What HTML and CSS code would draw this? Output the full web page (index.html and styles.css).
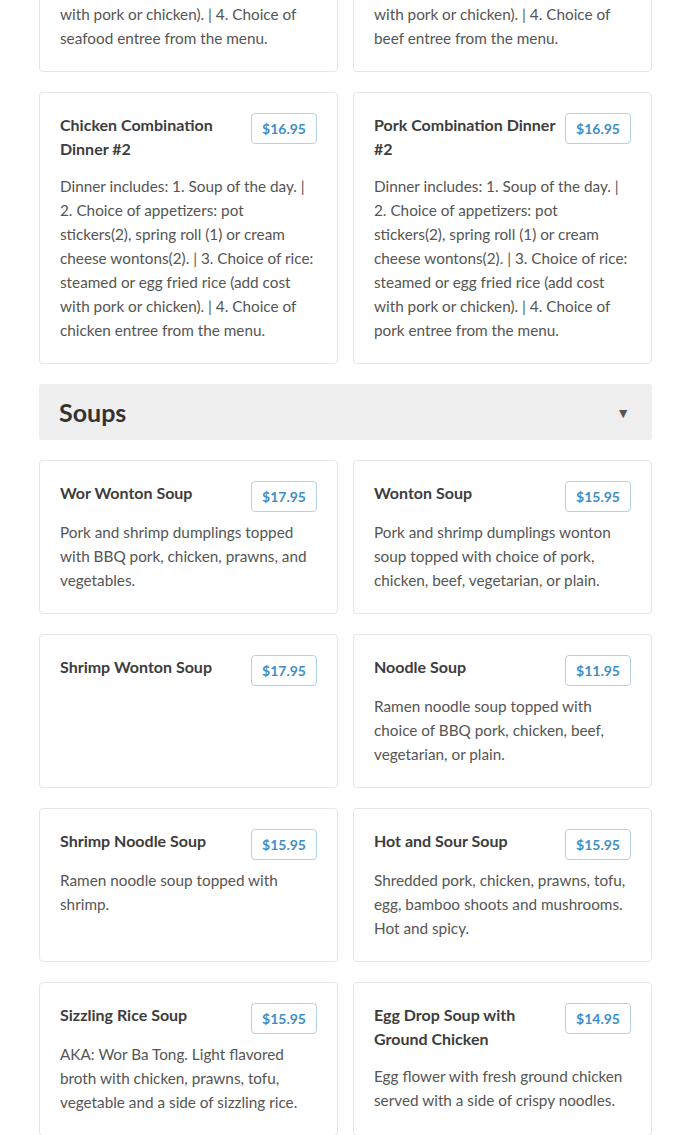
FILE: index.html
```html
<!DOCTYPE html>
<html lang="en">
<head>
<meta charset="utf-8">
<title>Menu</title>
<link rel="stylesheet" href="styles.css">
</head>
<body>
<main class="menu">
  <section class="grid">
    <article class="card">
      <div class="card-head"><h3 class="title">Seafood Combination Dinner #2</h3><span class="price">$17.95</span></div>
      <p class="desc">Dinner includes: 1. Soup of the day. | 2. Choice of appetizers: pot stickers(2), spring roll (1) or cream cheese wontons(2). | 3. Choice of rice: steamed or egg fried rice (add cost with pork or chicken). | 4. Choice of seafood entree from the menu.</p>
    </article>
    <article class="card">
      <div class="card-head"><h3 class="title">Beef Combination Dinner #2</h3><span class="price">$16.95</span></div>
      <p class="desc">Dinner includes: 1. Soup of the day. | 2. Choice of appetizers: pot stickers(2), spring roll (1) or cream cheese wontons(2). | 3. Choice of rice: steamed or egg fried rice (add cost with pork or chicken). | 4. Choice of beef entree from the menu.</p>
    </article>
    <article class="card">
      <div class="card-head"><h3 class="title">Chicken Combination Dinner #2</h3><span class="price">$16.95</span></div>
      <p class="desc">Dinner includes: 1. Soup of the day. | 2. Choice of appetizers: pot stickers(2), spring roll (1) or cream cheese wontons(2). | 3. Choice of rice: steamed or egg fried rice (add cost with pork or chicken). | 4. Choice of chicken entree from the menu.</p>
    </article>
    <article class="card">
      <div class="card-head"><h3 class="title">Pork Combination Dinner #2</h3><span class="price">$16.95</span></div>
      <p class="desc">Dinner includes: 1. Soup of the day. | 2. Choice of appetizers: pot stickers(2), spring roll (1) or cream cheese wontons(2). | 3. Choice of rice: steamed or egg fried rice (add cost with pork or chicken). | 4. Choice of pork entree from the menu.</p>
    </article>
  </section>

  <div class="section-head">
    <h2 class="section-title">Soups</h2>
    <span class="caret">&#9660;</span>
  </div>

  <section class="grid">
    <article class="card">
      <div class="card-head"><h3 class="title">Wor Wonton Soup</h3><span class="price">$17.95</span></div>
      <p class="desc">Pork and shrimp dumplings topped with BBQ pork, chicken, prawns, and vegetables.</p>
    </article>
    <article class="card">
      <div class="card-head"><h3 class="title">Wonton Soup</h3><span class="price">$15.95</span></div>
      <p class="desc">Pork and shrimp dumplings wonton soup topped with choice of pork, chicken, beef, vegetarian, or plain.</p>
    </article>
    <article class="card">
      <div class="card-head"><h3 class="title">Shrimp Wonton Soup</h3><span class="price">$17.95</span></div>
    </article>
    <article class="card">
      <div class="card-head"><h3 class="title">Noodle Soup</h3><span class="price">$11.95</span></div>
      <p class="desc">Ramen noodle soup topped with choice of BBQ pork, chicken, beef, vegetarian, or plain.</p>
    </article>
    <article class="card">
      <div class="card-head"><h3 class="title">Shrimp Noodle Soup</h3><span class="price">$15.95</span></div>
      <p class="desc">Ramen noodle soup topped with shrimp.</p>
    </article>
    <article class="card">
      <div class="card-head"><h3 class="title">Hot and Sour Soup</h3><span class="price">$15.95</span></div>
      <p class="desc">Shredded pork, chicken, prawns, tofu, egg, bamboo shoots and mushrooms. Hot and spicy.</p>
    </article>
    <article class="card">
      <div class="card-head"><h3 class="title">Sizzling Rice Soup</h3><span class="price">$15.95</span></div>
      <p class="desc">AKA: Wor Ba Tong. Light flavored broth with chicken, prawns, tofu, vegetable and a side of sizzling rice.</p>
    </article>
    <article class="card">
      <div class="card-head"><h3 class="title">Egg Drop Soup with Ground Chicken</h3><span class="price">$14.95</span></div>
      <p class="desc">Egg flower with fresh ground chicken served with a side of crispy noodles.</p>
    </article>
  </section>
</main>
</body>
</html>
```
FILE: styles.css
```css
* { box-sizing: border-box; }

html, body {
  margin: 0;
  padding: 0;
  background: #ffffff;
}

body {
  font-family: Lato, "Open Sans", "Liberation Sans", sans-serif;
  color: #555555;
}

.menu {
  margin: -200px 38px 40px 39px;
}

.grid {
  display: grid;
  grid-template-columns: 1fr 1fr;
  column-gap: 15px;
  row-gap: 20px;
}

.card {
  border: 1px solid #e6e6e6;
  border-radius: 4px;
  padding: 20px 20px 21px;
  background: #ffffff;
}

.card-head {
  display: flex;
  align-items: flex-start;
  justify-content: space-between;
  gap: 10px;
}

.title {
  margin: 0 0 5px;
  font-size: 16px;
  line-height: 24px;
  font-weight: 700;
  color: #3d3d3d;
}

.price {
  flex: none;
  display: inline-block;
  height: 31px;
  padding: 0 10px;
  border: 1px solid #b3d2e6;
  border-radius: 4px;
  font-size: 14px;
  line-height: 29px;
  font-weight: 700;
  color: #3f8fc6;
}

.desc {
  margin: 8px 0 0;
  font-size: 15.3px;
  line-height: 24px;
  color: #555555;
}

.section-head {
  display: flex;
  align-items: center;
  justify-content: space-between;
  height: 56px;
  margin: 20px 0;
  padding: 0 22px 0 20px;
  background: #efefef;
  border-radius: 3px;
}

.section-title {
  margin: 0;
  font-size: 25px;
  font-weight: 700;
  color: #333333;
}

.caret {
  font-size: 14px;
  color: #555555;
}
```
